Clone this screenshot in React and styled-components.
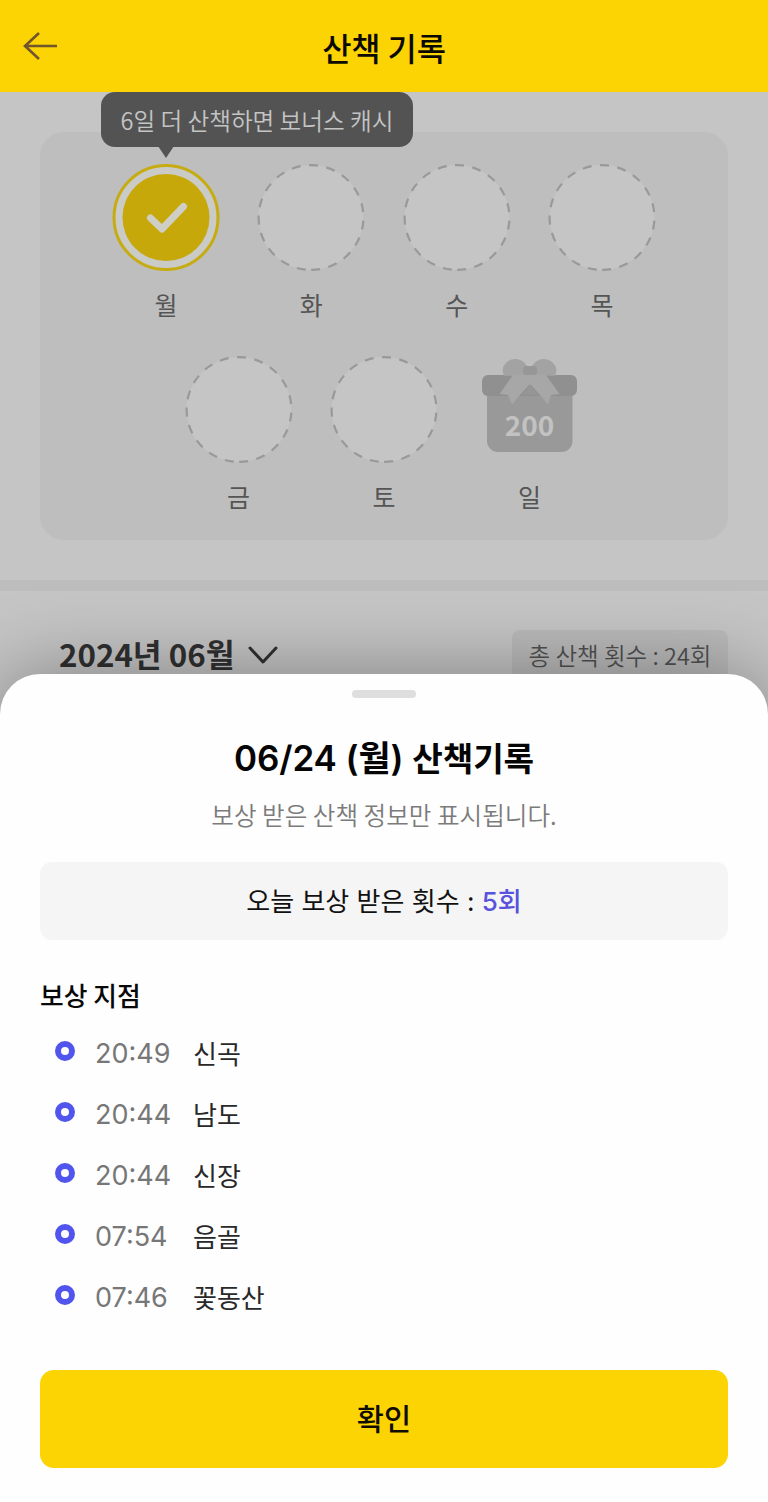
import React, { useState } from 'react';
import styled, { createGlobalStyle } from 'styled-components';

const GlobalStyle = createGlobalStyle`
	* {
		box-sizing: border-box;
	}
	body {
		margin: 0;
		background-color: #c5c5c5;
		font-family: 'Noto Sans CJK KR', sans-serif;
	}
	h1, h2, h3, p, ul {
		margin: 0;
		padding: 0;
	}
	button {
		border: none;
		cursor: pointer;
		font-family: inherit;
	}
`;

const Container = styled.div`
	position: relative;
	height: 1502px;
	width: 100%;
	overflow: hidden;
`;

const Header = styled.header`
	display: grid;
	grid-template-columns: 80px 1fr 80px;
	align-items: center;
	height: 92px;
	background-color: #fcd303;
`;

const BackButton = styled.button`
	display: flex;
	padding: 0 0 0 22px;
	background-color: transparent;
`;

const PageTitle = styled.h1`
	font-size: 31.8px;
	font-weight: 500;
	line-height: 46px;
	padding-top: 1px;
	letter-spacing: -0.1px;
	text-align: center;
	color: #0b0900;
`;

const StampCard = styled.section`
	position: relative;
	display: flex;
	flex-direction: column;
	gap: 33px;
	height: 408px;
	margin: 40px 40px 0;
	padding-top: 31px;
	border-radius: 24px;
	background-color: #bebebe;
`;

const Tooltip = styled.div`
	position: absolute;
	top: -40px;
	left: 61px;
	width: 312px;
	height: 55px;
	border-radius: 14px;
	background-color: #535353;
	color: #c4c4c4;
	font-size: 23.6px;
	font-weight: 350;
	line-height: 56px;
	text-align: center;
	white-space: nowrap;
	&::after {
		content: '';
		position: absolute;
		top: 54px;
		left: 57px;
		border: 8px solid transparent;
		border-top: 12px solid #535353;
		border-bottom: 0;
	}
`;

const StampRow = styled.div`
	display: flex;
	justify-content: center;
	gap: 37.4px;
`;

const Stamp = styled.div`
	display: flex;
	flex-direction: column;
	align-items: center;
	gap: 16px;
	width: 108px;
	svg {
		display: block;
	}
`;

const DayLabel = styled.span`
	height: 35px;
	font-size: 25px;
	line-height: 34px;
	color: #555;
`;

const GiftAmount = styled.text`
	font-size: 28px;
	font-weight: 700;
	fill: #c2c2c2;
`;

const Divider = styled.div`
	height: 11px;
	margin-top: 40px;
	background-color: #bdbdbd;
`;

const MonthBar = styled.div`
	display: flex;
	align-items: center;
	justify-content: space-between;
	height: 50px;
	margin: 39px 40px 0 59px;
`;

const MonthButton = styled.button`
	display: flex;
	align-items: center;
	gap: 14px;
	padding: 0;
	margin-bottom: 2px;
	background-color: transparent;
	color: #303030;
	font-size: 31.3px;
	font-weight: 700;
	line-height: 44px;
	white-space: nowrap;
	svg {
		margin-top: 2px;
	}
`;

const TotalBadge = styled.div`
	width: 216px;
	height: 50px;
	border-radius: 8px;
	background-color: #bababa;
	color: #515151;
	font-size: 23.5px;
	font-weight: 350;
	line-height: 51px;
	text-align: center;
	white-space: nowrap;
`;

const Sheet = styled.section`
	position: absolute;
	right: 0;
	bottom: 0;
	left: 0;
	display: flex;
	flex-direction: column;
	height: 828px;
	padding: 16px 40px 34px;
	border-radius: 40px 40px 0 0;
	background-color: #fefefe;
	box-shadow: 0 0 80px rgba(0, 0, 0, 0.36);
`;

const Handle = styled.div`
	align-self: center;
	width: 64px;
	height: 8px;
	border-radius: 4px;
	background-color: #dedede;
`;

const SheetTitle = styled.h2`
	height: 52px;
	margin-top: 34px;
	font-family: Inter, 'Noto Sans CJK KR', sans-serif;
	font-size: 35px;
	font-weight: 600;
	line-height: 52px;
	letter-spacing: -0.1px;
	text-align: center;
	color: #050505;
	span {
		font-size: 33.2px;
	}
`;

const SheetNote = styled.p`
	margin-top: 13px;
	font-size: 24.6px;
	font-weight: 350;
	line-height: 34px;
	text-align: center;
	color: #7b7b7b;
`;

const CountBox = styled.div`
	height: 78px;
	margin-top: 31px;
	border-radius: 12px;
	background-color: #f5f5f5;
	color: #111;
	font-family: Inter, 'Noto Sans CJK KR', sans-serif;
	font-size: 26px;
	line-height: 80px;
	text-align: center;
`;

const Count = styled.span`
	color: #5852dc;
	font-weight: 500;
`;

const SectionTitle = styled.h3`
	margin-top: 37px;
	font-size: 25.8px;
	font-weight: 500;
	line-height: 36px;
	color: #080808;
`;

const RecordList = styled.ul`
	display: flex;
	flex-direction: column;
	margin-top: 10px;
	list-style: none;
`;

const Record = styled.li`
	display: flex;
	align-items: center;
	height: 61px;
	padding-left: 15px;
	font-size: 26px;
`;

const Dot = styled.span`
	width: 20px;
	height: 20px;
	margin-bottom: 5px;
	border: 6px solid #5155ee;
	border-radius: 50%;
`;

const Time = styled.span`
	width: 98px;
	margin-left: 20px;
	color: #777;
	font-family: Inter, sans-serif;
	font-size: 27px;
`;

const Place = styled.span`
	margin-bottom: 2px;
	color: #292929;
`;

const ConfirmButton = styled.button`
	height: 98px;
	margin-top: auto;
	border-radius: 14px;
	background-color: #fcd303;
	color: #100d00;
	font-size: 29.5px;
	font-weight: 500;
	line-height: 95px;
	padding: 0 0 3px;
`;

const weeks = [
	[
		{ day: '월', type: 'done' },
		{ day: '화', type: 'empty' },
		{ day: '수', type: 'empty' },
		{ day: '목', type: 'empty' },
	],
	[
		{ day: '금', type: 'empty' },
		{ day: '토', type: 'empty' },
		{ day: '일', type: 'gift' },
	],
];

const records = [
	{ id: 1, time: '20:49', place: '신곡' },
	{ id: 2, time: '20:44', place: '남도' },
	{ id: 3, time: '20:44', place: '신장' },
	{ id: 4, time: '07:54', place: '음골' },
	{ id: 5, time: '07:46', place: '꽃동산' },
];

const DoneStamp = () => (
	<svg width='108' height='108' viewBox='0 0 108 108' fill='none'>
		<circle cx='54' cy='54.5' r='52' fill='#cacac6' stroke='#c6ac10' strokeWidth='3' />
		<circle cx='54' cy='54.5' r='43.5' fill='#c6a80b' />
		<path
			d='M38.5 55 50 66 71.5 43.5'
			stroke='#cfcec5'
			strokeWidth='7'
			strokeLinecap='round'
			strokeLinejoin='round'
		/>
	</svg>
);

const EmptyStamp = () => (
	<svg width='108' height='108' viewBox='0 0 108 108'>
		<circle
			cx='54'
			cy='54.5'
			r='52.4'
			fill='#c5c5c5'
			stroke='#999'
			strokeWidth='2.2'
			strokeDasharray='9 8.46'
			transform='rotate(95.7 54 54.5)'
		/>
	</svg>
);

const GiftStamp = () => (
	<svg width='108' height='108' viewBox='5 10 108 108'>
		<path d='M17 46h85.5v50a11 11 0 0 1-11 11H28a11 11 0 0 1-11-11z' fill='#999' />
		<rect x='12' y='30' width='95' height='21' rx='6' fill='#909090' />
		<path d='M57 21C52 13 43 12 37 17S32 29 35 31L54 30Z' fill='#a3a3a3' />
		<path d='M62 21C67 13 76 12 82 17S87 29 84 31L65 30Z' fill='#a3a3a3' />
		<path d='M43 30H57L60 39 49 51 42 59.5 38 50 29.5 49Z' fill='#a7a7a7' />
		<path d='M76 30H63L60 39 70 50 78 59.5 81 50 89.5 49Z' fill='#a7a7a7' />
		<path d='M52 29H68L60 40Z' fill='#a7a7a7' />
		<path d='M60 40 52 50H68Z' fill='#969696' />
		<rect x='53' y='21' width='14' height='9' rx='3' fill='#979797' />
		<GiftAmount x='59.5' y='91' textAnchor='middle'>
			200
		</GiftAmount>
	</svg>
);

const stamps = { done: DoneStamp, empty: EmptyStamp, gift: GiftStamp };

const App = () => {
	const [open, setOpen] = useState(true);

	return (
		<Container>
			<GlobalStyle />
			<Header>
				<BackButton aria-label='뒤로'>
					<svg width='36' height='30' viewBox='0 0 36 30' fill='none' stroke='#71552c' strokeWidth='2.6'>
						<path d='M35 15H3M17 2 3 15l14 13' />
					</svg>
				</BackButton>
				<PageTitle>산책 기록</PageTitle>
			</Header>
			<StampCard>
				{weeks.map((week, i) => (
					<StampRow key={i}>
						{week.map(({ day, type }) => {
							const Icon = stamps[type];
							return (
								<Stamp key={day}>
									<Icon />
									<DayLabel>{day}</DayLabel>
								</Stamp>
							);
						})}
					</StampRow>
				))}
				<Tooltip>6일 더 산책하면 보너스 캐시</Tooltip>
			</StampCard>
			<Divider />
			<MonthBar>
				<MonthButton>
					2024년 06월
					<svg width='30' height='20' viewBox='0 0 30 20' fill='none' stroke='#303030' strokeWidth='3'>
						<path d='M2 3 15 17 28 3' strokeLinecap='round' strokeLinejoin='round' />
					</svg>
				</MonthButton>
				<TotalBadge>총 산책 횟수 : 24회</TotalBadge>
			</MonthBar>
			{open && (
				<Sheet>
					<Handle />
					<SheetTitle>
						06/24 (월) <span>산책기록</span>
					</SheetTitle>
					<SheetNote>보상 받은 산책 정보만 표시됩니다.</SheetNote>
					<CountBox>
						오늘 보상 받은 횟수 : <Count>5회</Count>
					</CountBox>
					<SectionTitle>보상 지점</SectionTitle>
					<RecordList>
						{records.map((record) => (
							<Record key={record.id}>
								<Dot />
								<Time>{record.time}</Time>
								<Place>{record.place}</Place>
							</Record>
						))}
					</RecordList>
					<ConfirmButton onClick={() => setOpen(false)}>확인</ConfirmButton>
				</Sheet>
			)}
		</Container>
	);
};

export default App;
